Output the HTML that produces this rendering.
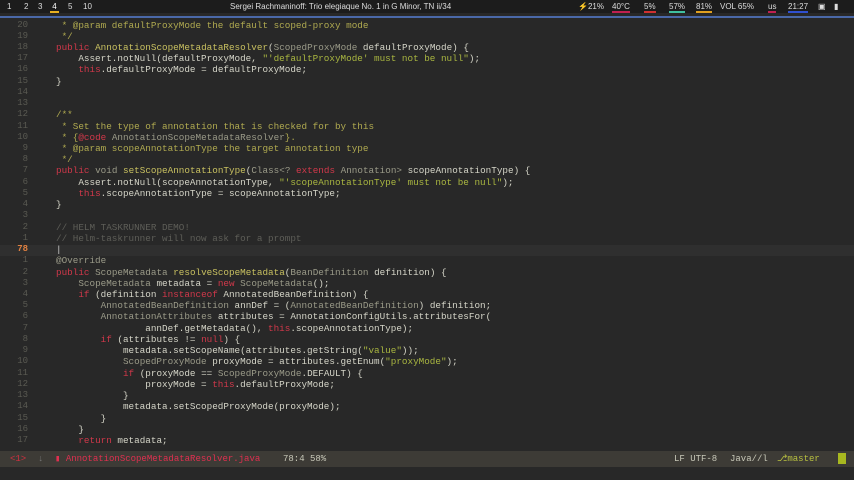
<!DOCTYPE html>
<html><head><meta charset="utf-8"><style>
body{margin:0;width:854px;height:480px;background:#282828;overflow:hidden;font-family:"Liberation Mono",monospace;position:relative}
#top{position:absolute;left:0;top:0;width:854px;height:13px;background:#1c1c1c;font:8px "Liberation Sans",sans-serif;color:#ddd}
#top span{position:absolute;top:2px}
#blue{position:absolute;left:0;top:16px;width:854px;height:2px;background:#4a68a8}
.u{border-bottom:2px solid}
.ln{position:absolute;left:0;width:28px;text-align:right;color:#5a5a52;font-size:9px}
.c{position:absolute;left:56px;white-space:pre;color:#d5d5c8;font-size:9.3px}
.k{color:#d0384a}.t{color:#9a9a88}.s{color:#a9b640}.d{color:#b0aa50}.g{color:#5e5e58}.f{color:#c8c060}
#cur{position:absolute;left:0;top:245px;width:854px;height:11px;background:#2f2f2f}
#sb{position:absolute;left:0;top:451px;width:854px;height:16px;background:#3d3b36;font-size:9px;color:#bbb}
#sb span{position:absolute;top:3px}
</style></head><body>
<div id="top">
<span style="left:7px">1</span><span style="left:24px">2</span><span style="left:38px">3</span>
<span style="left:50px;color:#fff;border-bottom:2px solid #e8b020">&nbsp;4&nbsp;</span><span style="left:68px">5</span><span style="left:83px">10</span>
<span style="left:230px">Sergei Rachmaninoff: Trio elegiaque No. 1 in G Minor, TN ii/34</span>
<span style="left:578px">⚡21%</span>
<span style="left:612px;border-bottom:2px solid #c02050">40°C</span>
<span style="left:644px;border-bottom:2px solid #d03030">5%</span>
<span style="left:669px;border-bottom:2px solid #40c0a0">57%</span>
<span style="left:696px;border-bottom:2px solid #e0a020">81%</span>
<span style="left:720px">VOL 65%</span>
<span style="left:768px;border-bottom:2px solid #c02050">us</span>
<span style="left:788px;border-bottom:2px solid #3050d0">21:27</span>
<span style="left:818px">▣</span><span style="left:834px">▮</span>
</div>
<div id="blue"></div>
<div id="cur"></div>
<div id="code"></div>
<script>
var L=[
["20",' <span class="d">* @param defaultProxyMode the default scoped-proxy mode</span>'],
["19",' <span class="d">*/</span>'],
["18",'<span class="k">public</span> <span class="f">AnnotationScopeMetadataResolver</span>(<span class="t">ScopedProxyMode</span> defaultProxyMode) {'],
["17",'    Assert.notNull(defaultProxyMode, <span class="s">"\'defaultProxyMode\' must not be null"</span>);'],
["16",'    <span class="k">this</span>.defaultProxyMode = defaultProxyMode;'],
["15",'}'],["14",''],["13",''],
["12",'<span class="d">/**</span>'],
["11",' <span class="d">* Set the type of annotation that is checked for by this</span>'],
["10",' <span class="d">* {</span><span class="k">@code</span><span class="t"> AnnotationScopeMetadataResolver</span><span class="d">}.</span>'],
["9",' <span class="d">* @param scopeAnnotationType the target annotation type</span>'],
["8",' <span class="d">*/</span>'],
["7",'<span class="k">public</span> <span class="t">void</span> <span class="f">setScopeAnnotationType</span>(<span class="t">Class&lt;? </span><span class="k">extends</span><span class="t"> Annotation&gt;</span> scopeAnnotationType) {'],
["6",'    Assert.notNull(scopeAnnotationType, <span class="s">"\'scopeAnnotationType\' must not be null"</span>);'],
["5",'    <span class="k">this</span>.scopeAnnotationType = scopeAnnotationType;'],
["4",'}'],["3",''],
["2",'<span class="g">// HELM TASKRUNNER DEMO!</span>'],
["1",'<span class="g">// Helm-taskrunner will now ask for a prompt</span>'],
["78",'<span style="color:#ccc">|</span>'],
["1",'<span class="t">@Override</span>'],
["2",'<span class="k">public</span> <span class="t">ScopeMetadata</span> <span class="f">resolveScopeMetadata</span>(<span class="t">BeanDefinition</span> definition) {'],
["3",'    <span class="t">ScopeMetadata</span> metadata = <span class="k">new</span> <span class="t">ScopeMetadata</span>();'],
["4",'    <span class="k">if</span> (definition <span class="k">instanceof</span> AnnotatedBeanDefinition) {'],
["5",'        <span class="t">AnnotatedBeanDefinition</span> annDef = (<span class="t">AnnotatedBeanDefinition</span>) definition;'],
["6",'        <span class="t">AnnotationAttributes</span> attributes = AnnotationConfigUtils.attributesFor('],
["7",'                annDef.getMetadata(), <span class="k">this</span>.scopeAnnotationType);'],
["8",'        <span class="k">if</span> (attributes != <span class="k">null</span>) {'],
["9",'            metadata.setScopeName(attributes.getString(<span class="s">"value"</span>));'],
["10",'            <span class="t">ScopedProxyMode</span> proxyMode = attributes.getEnum(<span class="s">"proxyMode"</span>);'],
["11",'            <span class="k">if</span> (proxyMode == <span class="t">ScopedProxyMode</span>.DEFAULT) {'],
["12",'                proxyMode = <span class="k">this</span>.defaultProxyMode;'],
["13",'            }'],
["14",'            metadata.setScopedProxyMode(proxyMode);'],
["15",'        }'],["16",'    }'],
["17",'    <span class="k">return</span> metadata;']
];
var h='';
for(var i=0;i<L.length;i++){var y=19.5+i*11.23;
h+='<div class="ln" style="top:'+y+'px'+(L[i][0]=="78"&&i==20?';color:#e08040;font-weight:bold':'')+'">'+L[i][0]+'</div><div class="c" style="top:'+y+'px">'+L[i][1]+'</div>';}
document.getElementById('code').innerHTML=h;
</script>
<div id="sb">
<span style="left:10px;color:#d03040">&lt;1&gt;</span><span style="left:38px;color:#777">↓</span>
<span style="left:55px;color:#e03050">▮ AnnotationScopeMetadataResolver.java</span>
<span style="left:283px;color:#c8c8b8">78:4 58%</span>
<span style="left:674px;color:#c8c8b8">LF UTF-8</span>
<span style="left:730px;color:#c8c8b8">Java//l</span>
<span style="left:777px;color:#b8c040">⎇master</span>
<span style="left:838px;top:2px;width:8px;height:11px;background:#a8b820"></span>
</div>
</body></html>
